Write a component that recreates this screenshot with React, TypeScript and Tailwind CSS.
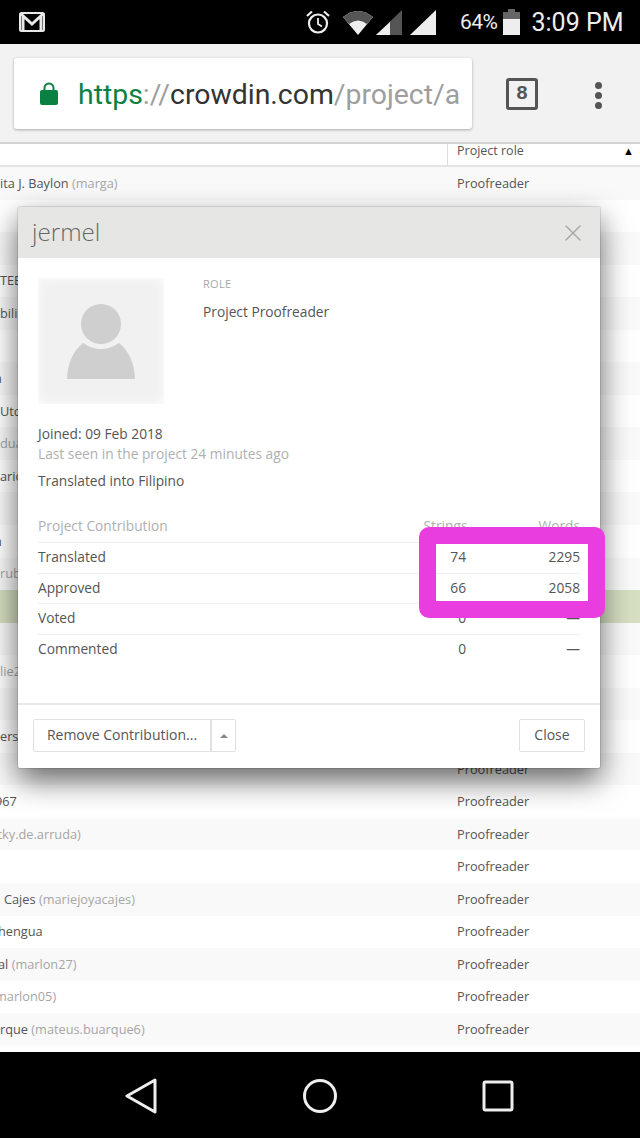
import { X } from "lucide-react";

type Row = { name?: string; handle?: string; indent?: string };

const rows: Row[] = [
  { name: "ita J. Baylon", handle: "(marga)" },
  {},
  {},
  { name: "TEE" },
  { name: "bili" },
  {},
  { name: "n", indent: "-ml-[6px]" },
  { name: "Utc" },
  { handle: "dua" },
  { name: "ario" },
  {},
  { name: "n", indent: "-ml-[6px]" },
  { handle: "rub" },
  {},
  {},
  { handle: "lie2" },
  {},
  { name: "ers" },
  {},
  { name: "967", indent: "-ml-[5px]" },
  { handle: "cky.de.arruda)", indent: "-ml-[4px]" },
  {},
  { name: "Cajes", handle: "(mariejoyacajes)", indent: "pl-1" },
  { name: "hengua", indent: "-ml-[2px]" },
  { name: "al", handle: "(marlon27)", indent: "-ml-[2px]" },
  { handle: "marlon05)", indent: "-ml-[5px]" },
  { name: "rque", handle: "(mateus.buarque6)" },
];

const stats = [
  { label: "Translated", strings: "74", words: "2295" },
  { label: "Approved", strings: "66", words: "2058" },
  { label: "Voted", strings: "0", words: "—" },
  { label: "Commented", strings: "0", words: "—" },
];

function StatusBar() {
  return (
    <div className="h-[44px] bg-black flex items-center text-[#eeeeee] font-['Roboto',sans-serif]">
      <svg width="26" height="20" viewBox="0 0 26 20" className="ml-[19px]">
        <rect x="1" y="1" width="24" height="18" rx="1.5" fill="none" stroke="#e8e8e8" strokeWidth="2" />
        <path d="M2 2 L13 12 L24 2 M4 3 V18 M22 3 V18" fill="none" stroke="#e8e8e8" strokeWidth="3" />
      </svg>
      <svg width="26" height="26" viewBox="0 0 26 26" className="ml-[260px]">
        <circle cx="13" cy="14.5" r="9" fill="none" stroke="#eeeeee" strokeWidth="2.2" />
        <path d="M13 9 V15 L17 17.5" fill="none" stroke="#eeeeee" strokeWidth="1.8" />
        <path d="M2 7 L7 2.5 M24 7 L19 2.5" stroke="#eeeeee" strokeWidth="2.2" />
      </svg>
      <svg width="30" height="25" viewBox="0 0 30 25" className="ml-[12px]">
        <path d="M0 7 Q15 -5 30 7 L15 25 Z" fill="#eeeeee" />
        <path d="M0 7 Q15 -5 30 7 L24 14 Q15 7 6 14 Z" fill="#555555" />
      </svg>
      <svg width="26" height="25" viewBox="0 0 26 25" className="ml-[3px]">
        <path d="M26 0 V25 H0 Z" fill="#555555" />
        <path d="M14 12 V25 H0 Z" fill="#eeeeee" />
      </svg>
      <svg width="26" height="25" viewBox="0 0 26 25" className="ml-[8px]">
        <path d="M26 0 V25 H0 Z" fill="#eeeeee" />
      </svg>
      <span className="ml-[24px] text-[21px] tracking-[-0.5px] leading-none">64%</span>
      <svg width="17" height="26" viewBox="0 0 17 26" className="ml-[5px]">
        <path d="M5 0 H12 V3 H17 V26 H0 V3 H5 Z" fill="#eeeeee" />
        <path d="M5 0 H12 V3 H17 V10 H0 V3 H5 Z" fill="#666666" />
      </svg>
      <span className="ml-[12px] text-[25px] leading-none whitespace-nowrap">3:09 PM</span>
    </div>
  );
}

function BrowserBar() {
  return (
    <div className="h-[100px] bg-[#f2f2f2] border-b-2 border-[#d4d4d4] flex items-start font-['Roboto',sans-serif]">
      <div className="mt-[14px] ml-[14px] w-[458px] h-[71px] bg-white rounded-[3px] shadow-[0_1px_3px_rgba(0,0,0,0.3)] flex items-center">
        <svg width="18" height="23" viewBox="0 0 18 23" className="ml-[26px] shrink-0">
          <path d="M4.5 9 V6 a4.5 4.5 0 0 1 9 0 V9" fill="none" stroke="#0b8043" strokeWidth="2" />
          <rect x="0" y="8" width="18" height="15" rx="2" fill="#0b8043" />
        </svg>
        <div className="ml-[20px] pt-[3px] whitespace-nowrap text-[28.4px] leading-none">
          <span className="text-[#0b8043]">https</span>
          <span className="text-[#9e9e9e]">://</span>
          <span className="text-[#333333]">crowdin.com</span>
          <span className="text-[#9e9e9e]">/project/a</span>
        </div>
      </div>
      <div className="mt-[34px] ml-[34px] w-[32px] h-[32px] border-[3px] border-[#555555] rounded-[3px] flex items-center justify-center text-[#555555] text-[20px] font-bold font-['Liberation_Mono',monospace]">
        8
      </div>
      <div className="mt-[38px] ml-[57px] flex flex-col gap-[3px]">
        <span className="w-[7px] h-[7px] rounded-full bg-[#555555]" />
        <span className="w-[7px] h-[7px] rounded-full bg-[#555555]" />
        <span className="w-[7px] h-[7px] rounded-full bg-[#555555]" />
      </div>
    </div>
  );
}

function MemberTable() {
  return (
    <div className="h-[908px] bg-white overflow-hidden text-[12.75px] text-[#555555]">
      <div className="h-[23px] flex border-b-2 border-[#e3e3e3]">
        <div className="w-[447px]" />
        <div className="flex-1 border-l border-[#dddddd] pl-[9px] pr-[6px] flex items-start justify-between text-[12.5px] leading-[13px]">
          <span>Project role</span>
          <span className="text-[11px] text-black leading-[13px]">▲</span>
        </div>
      </div>
      {rows.map((r, i) => (
        <div
          key={i}
          className={
            "h-[32.56px] flex items-center " +
            (i === 13 ? "bg-[#d5dec1]" : i % 2 === 0 ? "bg-[#f9f9f9]" : "bg-white")
          }
        >
          <div className="w-[457px] overflow-hidden">
            <div className={"whitespace-nowrap " + (r.indent ?? "")}>
              {r.name && <span>{r.name} </span>}
              {r.handle && <span className="text-[#a6a6a6]">{r.handle}</span>}
            </div>
          </div>
          {/* rows 1-17 sit fully behind the modal */}
          {(i === 0 || i >= 18) && <span>Proofreader</span>}
        </div>
      ))}
    </div>
  );
}

function MemberModal() {
  return (
    <div className="absolute left-[18px] top-[207px] w-[582px] h-[561px] bg-white rounded-[2px] shadow-[0_12px_30px_rgba(0,0,0,0.6),0_0_0_1px_rgba(0,0,0,0.1)] flex flex-col text-[13.75px] text-[#555555] font-['Open_Sans',sans-serif]">
      <div className="h-[51px] bg-[#e6e6e4] rounded-t-[2px] flex items-center justify-between pl-[14px] pr-[13px]">
        <span className="text-[24.2px] font-light text-[#666666] -mt-[1px]">jermel</span>
        <X size={28} strokeWidth={1.25} className="text-[#aaaaaa]" />
      </div>
      <div className="flex-1 px-[20px] pt-[20px]">
        <div className="flex">
          <div className="w-[126px] h-[126px] bg-[#f1f1f1] shadow-[inset_0_0_12px_rgba(255,255,255,0.9)] flex items-center justify-center">
            <svg width="70" height="76" viewBox="0 0 70 76">
              <circle cx="35" cy="21" r="20" fill="#cfcfcf" />
              <path d="M17 40 Q35 52 53 40 Q68 52 69 76 H1 Q2 52 17 40 Z" fill="#cfcfcf" />
            </svg>
          </div>
          <div className="ml-[39px] -mt-[1px]">
            <div className="text-[11px] leading-[14px] tracking-[0.3px] text-[#a8a8a8]">ROLE</div>
            <div className="mt-[11px] leading-[20px]">Project Proofreader</div>
          </div>
        </div>
        <div className="mt-[20px] leading-[20px]">Joined: 09 Feb 2018</div>
        <div className="leading-[20px] text-[#b0b0b0]">Last seen in the project 24 minutes ago</div>
        <div className="mt-[7px] leading-[20px]">Translated into Filipino</div>
        <div className="mt-[25px] h-[27px] flex items-start text-[#b0b0b0] leading-[20px] border-b border-[#efefeb]">
          <span className="flex-1">Project Contribution</span>
          <span className="w-[50px] text-right mr-[71px]">Strings</span>
          <span>Words</span>
        </div>
        {stats.map((s) => (
          <div key={s.label} className="h-[30.5px] flex items-center border-b border-[#efefeb] last:border-b-0">
            <span className="flex-1">{s.label}</span>
            <span className="w-[60px] text-right mr-[64px]">{s.strings}</span>
            <span className="w-[50px] text-right">{s.words}</span>
          </div>
        ))}
      </div>
      <div className="h-[65px] border-t-2 border-[#e9e9e9] flex items-start justify-between pt-[14px] px-[15px]">
        <div className="flex h-[33px] border border-[#e0e0e0] rounded-[2px]">
          <button className="w-[178px] pb-[2px] border-r-2 border-[#e0e0e0] text-center text-[14px] text-[#555555]">
            Remove Contribution...
          </button>
          <button className="w-[23px] flex items-center justify-center">
            <span className="w-0 h-0 border-x-[4px] border-x-transparent border-b-[4px] border-b-[#888888]" />
          </button>
        </div>
        <button className="w-[66px] h-[33px] pb-[2px] border border-[#e0e0e0] rounded-[2px] text-[14px] text-[#555555]">
          Close
        </button>
      </div>
    </div>
  );
}

function NavBar() {
  return (
    <div className="h-[86px] bg-black flex items-start">
      <svg width="32" height="36" viewBox="0 0 32 36" className="ml-[125px] mt-[26px]">
        <path d="M30 2 L2 18 L30 34 Z" fill="none" stroke="#eeeeee" strokeWidth="3" strokeLinejoin="round" />
      </svg>
      <svg width="36" height="36" viewBox="0 0 36 36" className="ml-[145px] mt-[26px]">
        <circle cx="18" cy="18" r="15.5" fill="none" stroke="#eeeeee" strokeWidth="3" />
      </svg>
      <svg width="32" height="32" viewBox="0 0 32 32" className="ml-[144px] mt-[28px]">
        <rect x="2" y="2" width="28" height="28" rx="1.5" fill="none" stroke="#eeeeee" strokeWidth="3" />
      </svg>
    </div>
  );
}

export default function App() {
  return (
    <div className="relative w-[640px] h-[1138px] overflow-hidden font-['Open_Sans',sans-serif]">
      <StatusBar />
      <BrowserBar />
      <MemberTable />
      <NavBar />
      <MemberModal />
      {/* pink highlight drawn over the screenshot */}
      <div className="absolute left-[419px] top-[527px] w-[186px] h-[91px] border-[17px] border-[#ea3de0] rounded-[10px]" />
    </div>
  );
}
